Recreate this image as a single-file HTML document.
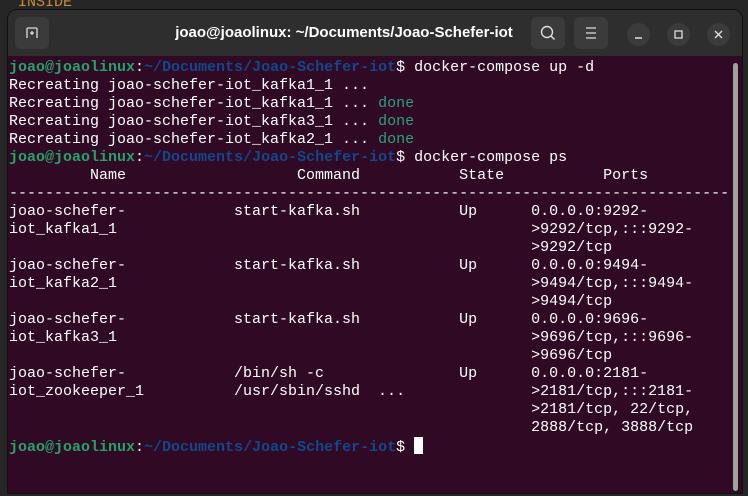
<!DOCTYPE html>
<html><head><style>
body{margin:0;width:748px;height:496px;background:#262626;overflow:hidden;position:relative;font-family:"Liberation Sans",sans-serif}
.bgtxt{position:absolute;left:18px;top:-6px;color:#c98a3a;font:15px "Liberation Mono",monospace}
.win{position:absolute;left:7px;top:9px;width:734px;height:483px;background:#300a24;border-radius:10px 10px 0 0;overflow:hidden;border:1px solid #111}
.hdr{position:absolute;left:0;top:0;width:100%;height:46px;background:#2e2e2e}
.title{position:absolute;left:-31px;width:100%;top:14px;text-align:center;color:#fff;font-weight:bold;font-size:15px}
.btn{position:absolute;top:7px;width:34px;height:32px;background:#3b3b3b;border-radius:6px}
.cir{position:absolute;top:13px;width:23px;height:23px;border-radius:50%;background:#3b3b3b}
.term{position:absolute;left:1px;top:49px;font:15px/18px "Liberation Mono",monospace;color:#fff;white-space:pre;margin:0}
.g{color:#26a269;font-weight:bold}.b{color:#12488b;font-weight:bold}.d{color:#2aa17a}
.sb{position:absolute;right:4px;top:53px;width:5px;height:428px;background:#a0a0a0;border-radius:3px}
.cur{display:inline-block;width:9px;height:17px;background:#fff;vertical-align:-3px}
</style></head><body>
<div class="bgtxt">INSIDE</div>
<div class="win">
<div class="hdr">
<div class="btn" style="left:7px"><svg width="34" height="32"><path d="M12 21V12q0-1 1-1h8q1 0 1 1v9M15 16h4M17 14v4" stroke="#ddd" stroke-width="1.3" fill="none"/></svg></div>
<div class="title">joao@joaolinux: ~/Documents/Joao-Schefer-iot</div>
<div class="btn" style="left:523px"><svg width="34" height="32"><circle cx="16" cy="15" r="5.5" stroke="#ddd" stroke-width="1.4" fill="none"/><path d="M20 19l3.5 3.5" stroke="#ddd" stroke-width="1.5"/></svg></div>
<div class="btn" style="left:566px"><svg width="34" height="32"><path d="M12 11h10M12 16h10M12 21h10" stroke="#ddd" stroke-width="1.3"/></svg></div>
<div class="cir" style="left:619px"><svg width="23" height="23"><path d="M8 15h7" stroke="#ddd" stroke-width="1.4"/></svg></div>
<div class="cir" style="left:659px"><svg width="23" height="23"><rect x="8" y="8" width="7" height="7" stroke="#ddd" stroke-width="1.3" fill="none"/></svg></div>
<div class="cir" style="left:699px"><svg width="23" height="23"><path d="M8 8l7 7M15 8l-7 7" stroke="#ddd" stroke-width="1.4"/></svg></div>
</div>
<pre class="term"><span class="g">joao@joaolinux</span>:<span class="b">~/Documents/Joao-Schefer-iot</span>$ docker-compose up -d
Recreating joao-schefer-iot_kafka1_1 ...
Recreating joao-schefer-iot_kafka1_1 ... <span class="d">done</span>
Recreating joao-schefer-iot_kafka3_1 ... <span class="d">done</span>
Recreating joao-schefer-iot_kafka2_1 ... <span class="d">done</span>
<span class="g">joao@joaolinux</span>:<span class="b">~/Documents/Joao-Schefer-iot</span>$ docker-compose ps
         Name                   Command           State           Ports
--------------------------------------------------------------------------------
joao-schefer-            start-kafka.sh           Up      0.0.0.0:9292-
iot_kafka1_1                                              >9292/tcp,:::9292-
                                                          >9292/tcp
joao-schefer-            start-kafka.sh           Up      0.0.0.0:9494-
iot_kafka2_1                                              >9494/tcp,:::9494-
                                                          >9494/tcp
joao-schefer-            start-kafka.sh           Up      0.0.0.0:9696-
iot_kafka3_1                                              >9696/tcp,:::9696-
                                                          >9696/tcp
joao-schefer-            /bin/sh -c               Up      0.0.0.0:2181-
iot_zookeeper_1          /usr/sbin/sshd  ...              >2181/tcp,:::2181-
                                                          >2181/tcp, 22/tcp,
                                                          2888/tcp, 3888/tcp
<span class="g">joao@joaolinux</span>:<span class="b">~/Documents/Joao-Schefer-iot</span>$ <span class="cur"></span></pre>
<div class="sb"></div>
</div>
</body></html>
